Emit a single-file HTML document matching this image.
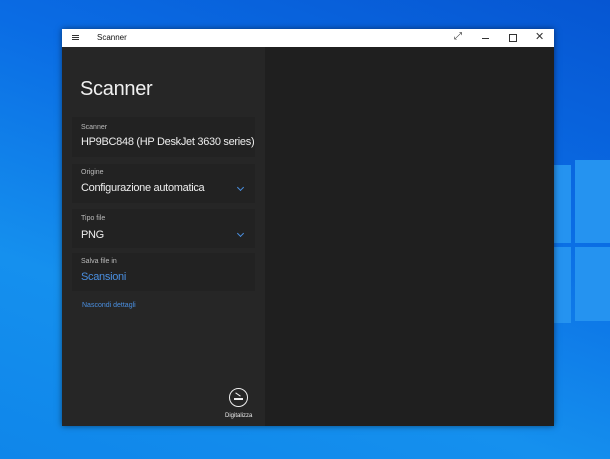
<!DOCTYPE html><html><head><style>
body{margin:0;width:610px;height:459px;overflow:hidden;position:relative;font-family:"Liberation Sans",sans-serif;
background:linear-gradient(200deg,#0656d2 0%,#0a6ce4 35%,#1590ee 70%,#0f86ea 100%);}
.pane{position:absolute;background:#2593f0;}
.win{position:absolute;left:62px;top:29px;width:492px;height:397px;background:#1f1f1f;box-shadow:0 0 6px rgba(0,0,0,.5)}
.tb{position:absolute;left:0;top:0;width:492px;height:18px;background:#fff;font-size:8px;color:#111}
.left{position:absolute;left:0;top:18px;width:203px;height:379px;background:#262626}
.card{position:absolute;left:10px;width:183px;background:#222}
.lab{position:absolute;left:9px;font-size:7px;color:#bbb;white-space:nowrap}
.val{position:absolute;left:9px;font-size:11px;color:#eee;white-space:nowrap;letter-spacing:-0.3px}
.chev{position:absolute;right:12px;width:4px;height:4px;border-right:1.5px solid #4a8fe0;border-bottom:1.5px solid #4a8fe0;transform:rotate(45deg)}
</style></head><body>
<div class="pane" style="left:554px;top:165px;width:17px;height:78px"></div>
<div class="pane" style="left:575px;top:160px;width:35px;height:83px"></div>
<div class="pane" style="left:554px;top:247px;width:17px;height:76px"></div>
<div class="pane" style="left:575px;top:247px;width:35px;height:74px"></div>
<div class="win">
<div class="tb">
<div style="position:absolute;left:10px;top:6px;width:7px;height:1px;background:#333;box-shadow:0 2px 0 #333,0 4px 0 #333"></div>
<div style="position:absolute;left:35px;top:4px">Scanner</div>
<div style="position:absolute;left:392px;top:2px;font-size:10px;color:#333">⤢</div>
<div style="position:absolute;left:420px;top:9px;width:7px;height:1px;background:#333"></div>
<div style="position:absolute;left:447px;top:5px;width:6px;height:6px;border:1px solid #333"></div>
<div style="position:absolute;left:473px;top:1px;font-size:11px;color:#333">✕</div>
</div>
<div class="left">
<div style="position:absolute;left:18px;top:31px;font-size:20px;color:#f0f0f0;letter-spacing:-0.3px">Scanner</div>
<div class="card" style="top:70px;height:40px"><div class="lab" style="top:7px">Scanner</div><div class="val" style="top:19px">HP9BC848 (HP DeskJet 3630 series)</div></div>
<div class="card" style="top:117px;height:39px"><div class="lab" style="top:5px">Origine</div><div class="val" style="top:18px">Configurazione automatica</div><div class="chev" style="top:21px"></div></div>
<div class="card" style="top:162px;height:39px"><div class="lab" style="top:6px">Tipo file</div><div class="val" style="top:20px">PNG</div><div class="chev" style="top:22px"></div></div>
<div class="card" style="top:206px;height:38px"><div class="lab" style="top:5px">Salva file in</div><div class="val" style="top:18px;color:#4a8fe0">Scansioni</div></div>
<div style="position:absolute;left:20px;top:255px;font-size:7px;color:#4a8fe0">Nascondi dettagli</div>
<div style="position:absolute;left:167px;top:341px;width:17px;height:17px;border:1.5px solid #eee;border-radius:50%"><div style="position:absolute;left:4px;top:9px;width:9px;height:2px;background:#eee"></div><div style="position:absolute;left:5px;top:5px;width:6px;height:1px;background:#eee;transform:rotate(35deg)"></div></div>
<div style="position:absolute;left:163px;top:366px;font-size:6px;color:#eee">Digitalizza</div>
</div>
</div>
</body></html>
